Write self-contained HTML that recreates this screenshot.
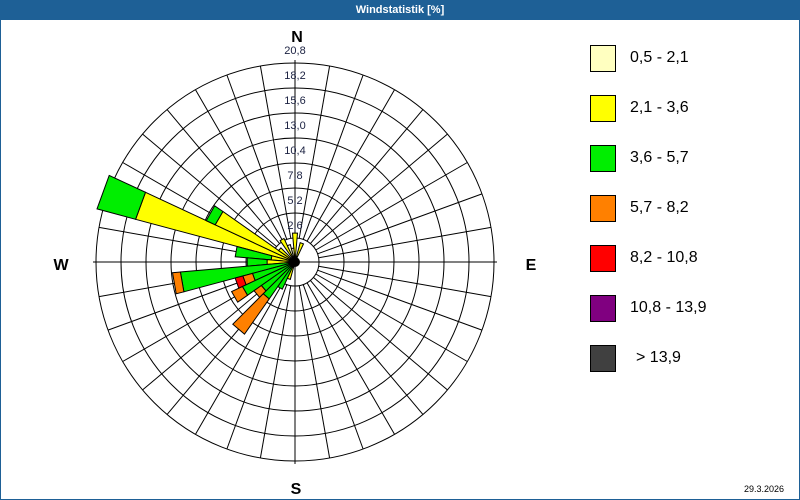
<!DOCTYPE html>
<html><head><meta charset="utf-8">
<style>
html,body{margin:0;padding:0;background:#fff;}
#w{position:relative;width:798px;height:479px;border:1px solid #1e6096;border-top:none;background:#fff;margin-top:20px;}
#t{position:absolute;left:0;top:0;width:800px;height:20px;background:#1e6096;color:#fff;font:bold 11px "Liberation Sans",sans-serif;text-align:center;line-height:20px;}
svg{position:absolute;left:0;top:0;}
.lg{position:absolute;left:590px;width:24px;height:25px;border:1px solid #000;}
.lt{position:absolute;left:630px;font:16px "Liberation Sans",sans-serif;color:#000;}
.d{font:bold 16px "Liberation Sans",sans-serif;}
</style></head><body>
<div id="t">Windstatistik [%]</div>
<div id="w"></div>
<svg width="800" height="500" id="s" xmlns="http://www.w3.org/2000/svg"></svg>
<div class="lg" style="top:45px;background:#ffffc0"></div><div class="lt" style="top:49px">0,5 - 2,1</div>
<div class="lg" style="top:95px;background:#ffff00"></div><div class="lt" style="top:99px">2,1 - 3,6</div>
<div class="lg" style="top:145px;background:#00ee00"></div><div class="lt" style="top:149px">3,6 - 5,7</div>
<div class="lg" style="top:195px;background:#ff8000"></div><div class="lt" style="top:199px">5,7 - 8,2</div>
<div class="lg" style="top:245px;background:#ff0000"></div><div class="lt" style="top:249px">8,2 - 10,8</div>
<div class="lg" style="top:295px;background:#800080"></div><div class="lt" style="top:299px">10,8 - 13,9</div>
<div class="lg" style="top:345px;background:#404040"></div><div class="lt" style="top:349px;left:636px">&gt; 13,9</div>
<div style="position:absolute;left:744px;top:484px;font:9px 'Liberation Sans',sans-serif">29.3.2026</div>
<script>
var cx=295,cy=262,s='';
function P(b,r){var a=b*Math.PI/180;return (cx+r*Math.sin(a)).toFixed(1)+','+(cy-r*Math.cos(a)).toFixed(1);}
for(var k=0;k<8;k++){s+='<circle cx="'+cx+'" cy="'+cy+'" r="'+(24+25*k)+'" fill="none" stroke="#000" stroke-width="1"/>';}
for(var b=0;b<360;b+=10){s+='<line x1="'+P(b,24).split(',')[0]+'" y1="'+P(b,24).split(',')[1]+'" x2="'+P(b,199).split(',')[0]+'" y2="'+P(b,199).split(',')[1]+'" stroke="#000" stroke-width="1"/>';}
s+='<line x1="93" y1="262" x2="497" y2="262" stroke="#000"/><line x1="295" y1="60" x2="295" y2="464" stroke="#000"/>';
var C={l:'#ffffc0',y:'#ffff00',g:'#00ee00',o:'#ff8000',r:'#ff0000'};
var bars=[[290,[['y',165],['g',205]]],[300,[['y',88],['g',98]]],[280,[['y',24],['g',60]]],[270,[['y',28],['g',48]]],
[260,[['g',115],['o',123]]],[250,[['g',44],['o',54],['r',62]]],[240,[['g',58],['o',70]]],[230,[['g',41],['o',50]]],
[220,[['g',45],['o',88]]],[0,[['y',29]]],[20,[['y',20]]],[330,[['y',26]]],[310,[['y',20]]],[340,[['l',18]]],[350,[['l',14]]],[210,[['g',30]]],[200,[['y',18]]]];
bars.forEach(function(br){var r0=0;br[1].forEach(function(sg){var r1=sg[1];
s+='<polygon points="'+P(br[0]-5,r0)+' '+P(br[0]+5,r0)+' '+P(br[0]+5,r1)+' '+P(br[0]-5,r1)+'" fill="'+C[sg[0]]+'" stroke="#000" stroke-width="1"/>';r0=r1;});});
s+='<circle cx="295" cy="262" r="5" fill="#000"/>';
var v=['2,6','5,2','7,8','10,4','13,0','15,6','18,2','20,8'];
for(var n=1;n<=8;n++){s+='<text x="295" y="'+(262-(24+25*n-12)+4)+'" text-anchor="middle" font-family="Liberation Sans,sans-serif" font-size="11" fill="#1a2040">'+v[n-1]+'</text>';}
s+='<text class="d" x="297" y="42" text-anchor="middle">N</text><text class="d" x="61" y="270" text-anchor="middle">W</text><text class="d" x="531" y="270" text-anchor="middle">E</text><text class="d" x="296" y="494" text-anchor="middle">S</text>';
document.getElementById('s').innerHTML=s;
</script>
</body></html>
